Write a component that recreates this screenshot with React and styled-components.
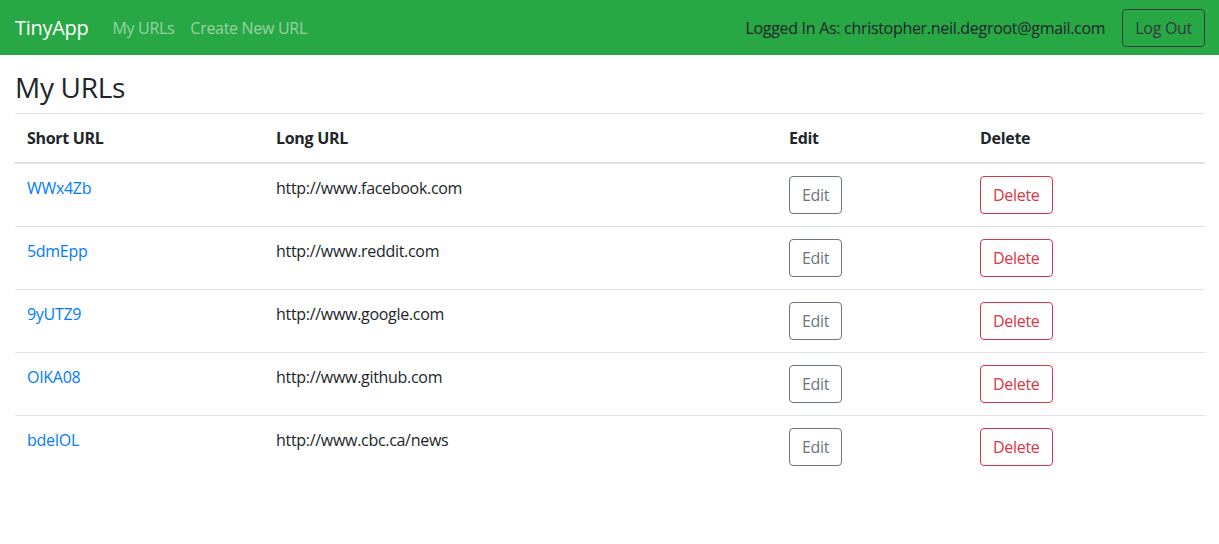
import React from 'react';
import styled, { createGlobalStyle } from 'styled-components';

const GlobalStyle = createGlobalStyle`
    * { box-sizing: border-box; }
    body {
        margin: 0;
        font-family: "Open Sans", "Noto Sans", sans-serif;
        font-size: 16px;
        line-height: 1.5;
        letter-spacing: -0.3px;
        color: #212529;
        background: #fff;
    }
`

const urls = [
    { short: 'WWx4Zb', long: 'http://www.facebook.com' },
    { short: '5dmEpp', long: 'http://www.reddit.com' },
    { short: '9yUTZ9', long: 'http://www.google.com' },
    { short: 'OIKA08', long: 'http://www.github.com' },
    { short: 'bdeIOL', long: 'http://www.cbc.ca/news' },
];

const App = () => {
    return(
        <>
            <GlobalStyle />
            <Navbar>
                <Brand href="#">TinyApp</Brand>
                <NavLinks>
                    <NavLink href="#">My URLs</NavLink>
                    <NavLink href="#">Create New URL</NavLink>
                </NavLinks>
                <UserArea>
                    <UserText>Logged In As: christopher.neil.degroot@gmail.com</UserText>
                    <Button variant="dark">Log Out</Button>
                </UserArea>
            </Navbar>

            <Main>
                <Title>My URLs</Title>
                <Table>
                    <colgroup>
                        <col style={{width: 249}} />
                        <col style={{width: 513}} />
                        <col style={{width: 191}} />
                        <col style={{width: 237}} />
                    </colgroup>
                    <thead>
                        <tr>
                            <Th>Short URL</Th>
                            <Th>Long URL</Th>
                            <Th>Edit</Th>
                            <Th>Delete</Th>
                        </tr>
                    </thead>
                    <tbody>
                    {
                        urls.map(u => {
                            return(
                                <tr key={u.short}>
                                    <Td><ShortLink href="#">{u.short}</ShortLink></Td>
                                    <Td>{u.long}</Td>
                                    <Td><Button variant="secondary">Edit</Button></Td>
                                    <Td><Button variant="danger">Delete</Button></Td>
                                </tr>
                            )
                        })
                    }
                    </tbody>
                </Table>
            </Main>
        </>
    )
}

const colors = {
    dark: '#343a40',
    secondary: '#6c757d',
    danger: '#dc3545',
}

const Navbar = styled.nav`
    display: flex;
    align-items: center;
    height: 55px;
    padding: 8px 14px 8px 15px;
    background-color: #28a745;
`

const Brand = styled.a`
    font-size: 20px;
    line-height: 30px;
    color: #fff;
    text-decoration: none;
    margin-right: 16px;
`

const NavLinks = styled.div`
    display: flex;
    flex: 1;
`

const NavLink = styled.a`
    padding: 8px;
    color: rgba(255,255,255,.5);
    text-decoration: none;
`

const UserArea = styled.div`
    display: flex;
    align-items: center;
    gap: 17px;
`

const UserText = styled.span`
    color: #212529;
`

const Button = styled.button`
    font-family: inherit;
    font-size: 16px;
    line-height: 24px;
    letter-spacing: -0.3px;
    padding: 6px 12px;
    border-radius: 4px;
    background: transparent;
    color: ${p => colors[p.variant]};
    border: 1px solid ${p => colors[p.variant]};
    cursor: pointer;
`

const Main = styled.main`
    padding: 16px 14px 0 15px;
`

const Title = styled.h3`
    margin: 0 0 8px;
    font-size: 28px;
    font-weight: 500;
    line-height: 1.2;
`

const Table = styled.table`
    width: 100%;
    border-collapse: collapse;
    table-layout: fixed;
`

const Th = styled.th`
    text-align: left;
    font-weight: 700;
    padding: 12px;
    border-top: 1px solid #dee2e6;
    border-bottom: 2px solid #dee2e6;
`

const Td = styled.td`
    padding: 12px;
    vertical-align: top;
    border-top: 1px solid #dee2e6;
`

const ShortLink = styled.a`
    color: #007bff;
    text-decoration: none;
`

export default App;
